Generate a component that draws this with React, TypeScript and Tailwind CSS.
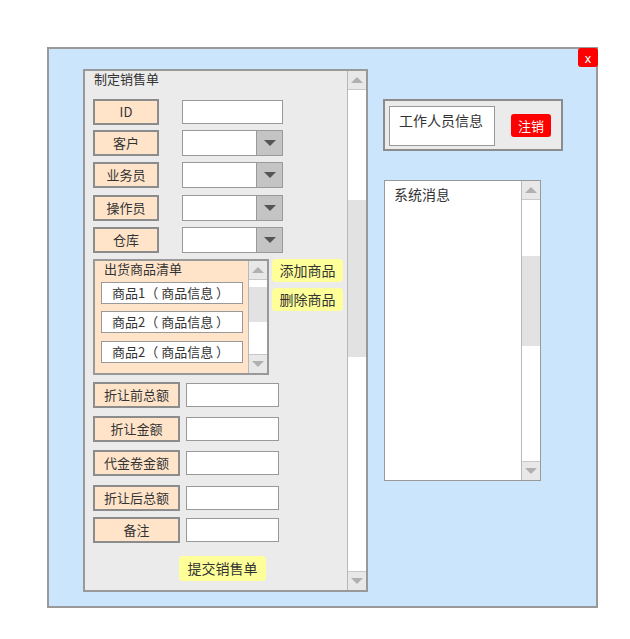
import React from "react";

const font = { fontFamily: '"Noto Sans CJK SC", "Noto Sans", sans-serif' };

const UpArrow = () => (
  <div className="w-0 h-0 border-x-[6px] border-x-transparent border-b-[6px] border-b-[#b0b0b0]" />
);

const DownArrow = ({ color = "border-t-[#b0b0b0]" }: { color?: string }) => (
  <div className={`w-0 h-0 border-x-[6px] border-x-transparent border-t-[6px] ${color}`} />
);

// Barre de défilement verticale : gap = espace avant le curseur, thumb = hauteur du curseur
const ScrollBar = ({ gap, thumb }: { gap: string; thumb: string }) => (
  <div className="w-[19px] shrink-0 flex flex-col border-l border-[#b8b8b8] bg-white">
    <div className="h-[19px] bg-[#e8e8e8] border-b border-[#c8c8c8] flex items-center justify-center">
      <UpArrow />
    </div>
    <div className={gap} />
    <div className={`${thumb} bg-[#e2e2e2]`} />
    <div className="flex-1" />
    <div className="h-[19px] bg-[#e8e8e8] border-t border-[#c8c8c8] flex items-center justify-center">
      <DownArrow />
    </div>
  </div>
);

const Label = ({ text, wide }: { text: string; wide?: boolean }) => (
  <div
    className={`${wide ? "w-[87px]" : "w-[66px]"} h-[26px] shrink-0 border-2 border-[#8c8c8c] bg-[#ffe4ca] flex items-center justify-center text-[13px] text-[#333]`}
  >
    {text}
  </div>
);

const Select = () => (
  <div className="w-[101px] h-[26px] border border-[#999] bg-white flex">
    <div className="flex-1" />
    <div className="w-[26px] bg-[#c4c4c4] border-l border-[#999] flex items-center justify-center">
      <DownArrow color="border-t-[#555]" />
    </div>
  </div>
);

const YellowButton = ({ text, className }: { text: string; className: string }) => (
  <div
    className={`${className} bg-[#ffff99] rounded-[4px] flex items-center justify-center text-[14px] text-[#333]`}
  >
    {text}
  </div>
);

const GoodsItem = ({ text, className }: { text: string; className: string }) => (
  <div
    className={`${className} w-[142px] h-[22px] border border-[#999] bg-white pl-[10px] flex items-center text-[13px] text-[#333] whitespace-pre`}
  >
    {text}
  </div>
);

const SalesForm = () => (
  <div className="w-[285px] h-[523px] shrink-0 border-2 border-[#999] bg-[#ebebeb] flex">
    <div className="flex-1 flex flex-col pl-[8px]">
      <div className="h-[28px] pl-[1px] text-[13px] leading-[15px] text-[#333]">制定销售单</div>

      <div className="flex items-center">
        <Label text="ID" />
        <div className="ml-[23px] w-[101px] h-[24px] border border-[#999] bg-white" />
      </div>
      <div className="flex items-center mt-[5px]">
        <Label text="客户" />
        <div className="ml-[23px]">
          <Select />
        </div>
      </div>
      <div className="flex items-center mt-[6px]">
        <Label text="业务员" />
        <div className="ml-[23px]">
          <Select />
        </div>
      </div>
      <div className="flex items-center mt-[7px]">
        <Label text="操作员" />
        <div className="ml-[23px]">
          <Select />
        </div>
      </div>
      <div className="flex items-center mt-[6px]">
        <Label text="仓库" />
        <div className="ml-[23px]">
          <Select />
        </div>
      </div>

      {/* Liste des produits */}
      <div className="flex items-start mt-[6px]">
        <div className="w-[176px] h-[116px] border-2 border-[#999] bg-[#ffe4ca] flex">
          <div className="flex-1 flex flex-col pl-[6px]">
            <div className="h-[21px] pl-[3px] text-[13px] leading-[15px] text-[#333]">出货商品清单</div>
            <GoodsItem text="商品1（ 商品信息 ）" className="" />
            <GoodsItem text="商品2（ 商品信息 ）" className="mt-[7px]" />
            <GoodsItem text="商品2（ 商品信息 ）" className="mt-[8px]" />
          </div>
          <ScrollBar gap="h-[7px]" thumb="h-[35px]" />
        </div>
        <div className="ml-[3px] flex flex-col">
          <YellowButton text="添加商品" className="w-[71px] h-[23px]" />
          <YellowButton text="删除商品" className="w-[71px] h-[23px] mt-[6px]" />
        </div>
      </div>

      <div className="flex items-center mt-[7px]">
        <Label text="折让前总额" wide />
        <div className="ml-[6px] w-[93px] h-[24px] border border-[#999] bg-white" />
      </div>
      <div className="flex items-center mt-[8px]">
        <Label text="折让金额" wide />
        <div className="ml-[6px] w-[93px] h-[24px] border border-[#999] bg-white" />
      </div>
      <div className="flex items-center mt-[8px]">
        <Label text="代金卷金额" wide />
        <div className="ml-[6px] w-[93px] h-[24px] border border-[#999] bg-white" />
      </div>
      <div className="flex items-center mt-[9px]">
        <Label text="折让后总额" wide />
        <div className="ml-[6px] w-[93px] h-[24px] border border-[#999] bg-white" />
      </div>
      <div className="flex items-center mt-[6px]">
        <Label text="备注" wide />
        <div className="ml-[6px] w-[93px] h-[24px] border border-[#999] bg-white" />
      </div>

      <YellowButton text="提交销售单" className="mt-[13px] ml-[86px] w-[87px] h-[25px]" />
    </div>
    <ScrollBar gap="h-[110px]" thumb="h-[157px]" />
  </div>
);

const SidePanel = () => (
  <div className="ml-[15px] pt-[30px] flex flex-col">
    <div className="w-[180px] h-[52px] border-2 border-[#8c8c8c] bg-[#ebebeb] flex items-start">
      <div className="ml-[4px] mt-[5px] w-[106px] h-[40px] border border-[#999] bg-white pl-[9px] pt-[4px] text-[14px] leading-[18px] text-[#333]">
        工作人员信息
      </div>
      <div className="ml-[16px] mt-[13px] w-[40px] h-[23px] bg-[#ff0000] rounded-[3px] flex items-center justify-center text-[13px] text-white">
        注销
      </div>
    </div>
    <div className="mt-[29px] ml-[1px] w-[157px] h-[301px] border border-[#999] bg-white flex">
      <div className="flex-1 pl-[9px] pt-[4px] text-[14px] leading-[18px] text-[#333]">系统消息</div>
      <ScrollBar gap="h-[56px]" thumb="h-[90px]" />
    </div>
  </div>
);

export default function App() {
  return (
    <div className="w-[630px] h-[639px] bg-white pt-[47px] pl-[47px]" style={font}>
      <div className="relative w-[551px] h-[561px] border-2 border-[#999] bg-[#cbe5fd] flex items-start pl-[34px] pt-[20px]">
        <div className="absolute top-[-1px] right-[-2px] w-[20px] h-[19px] bg-[#ff0000] rounded-[3px] flex items-center justify-center text-[13px] leading-none text-white">
          x
        </div>
        <SalesForm />
        <SidePanel />
      </div>
    </div>
  );
}
